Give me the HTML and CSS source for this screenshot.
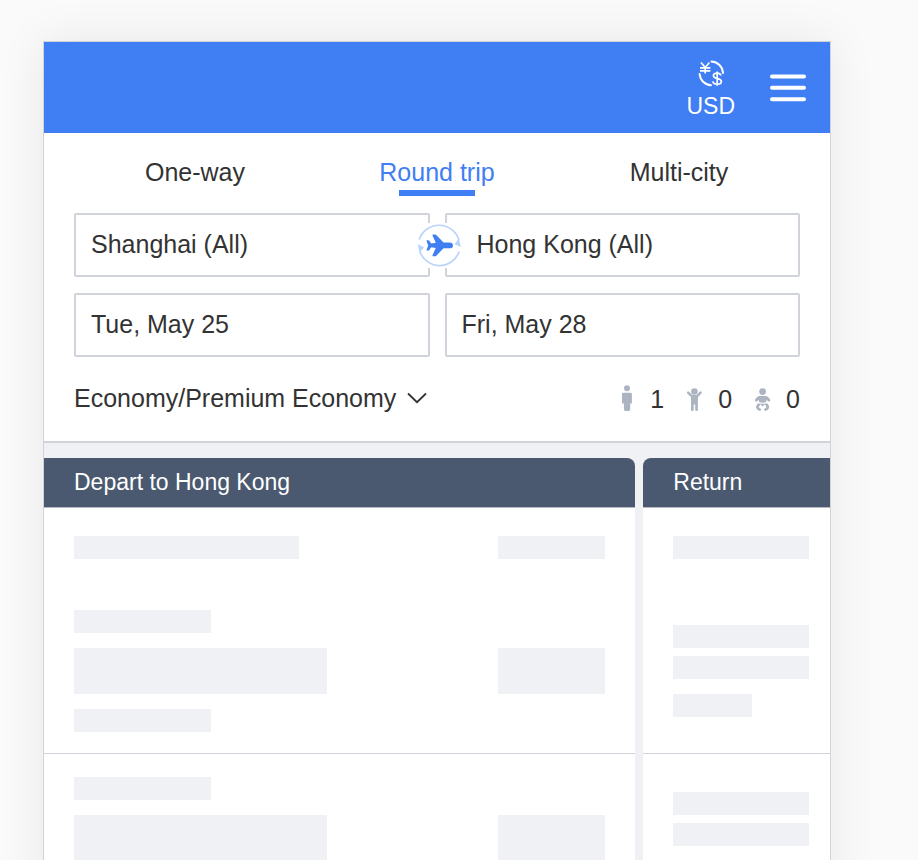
FILE: index.html
```html
<!DOCTYPE html>
<html lang="en">
<head>
<meta charset="utf-8">
<title>Flight search</title>
<link rel="stylesheet" href="styles.css">
</head>
<body>
<div class="app">
  <header class="topbar">
    <button class="currency" type="button">
      <svg width="28" height="28" viewBox="0 0 28 28" aria-hidden="true">
        <g fill="none" stroke="#fff" stroke-width="2" stroke-linecap="round">
          <path d="M14.500 1.500A12 12 0 0 1 26 13"/>
          <path d="M2.600 14A12 12 0 0 0 14 25.200"/>
        </g>
        <g fill="none" stroke="#fff" stroke-width="1.700">
          <path d="M4 2.500 8.200 7.500 12.400 2.500M8.200 7.500V13.500M3 7.800H13.400M3 10.800H13.400"/>
          <path d="M24 15.500C23.600 13.900 22.300 13.100 20.100 13.100c-2.300 0-3.700 1.100-3.700 2.700 0 3.800 8 1.800 8 5.600 0 1.700-1.700 2.700-4.200 2.700-2.500 0-4.100-1-4.400-2.800M20.200 11.500V25.800"/>
        </g>
      </svg>
      <span>USD</span>
    </button>
    <button class="menu" type="button" aria-label="Menu">
      <svg width="36" height="28" viewBox="0 0 36 28" aria-hidden="true">
        <path d="M2 2.400H34M2 13.800H34M2 25.200H34" stroke="#fff" stroke-width="4" stroke-linecap="round"/>
      </svg>
    </button>
  </header>

  <form class="search">
    <nav class="tabs">
      <a href="#one-way">One-way</a>
      <a href="#round-trip" class="active" aria-current="page">Round trip</a>
      <a href="#multi-city">Multi-city</a>
    </nav>
    <div class="fields">
      <input type="text" value="Shanghai (All)" aria-label="From">
      <input type="text" class="destination" value="Hong Kong (All)" aria-label="To">
      <button class="swap" type="button" aria-label="Swap cities">
        <svg width="45" height="45" viewBox="0 0 45 45" aria-hidden="true">
          <g fill="none" stroke="#b9d3fb" stroke-width="1.700">
            <path d="M2.300 16.500A20.800 20.800 0 0 1 42.100 17.500"/>
            <path d="M42.200 28.500A20.800 20.800 0 0 1 2.700 28"/>
          </g>
          <path d="M43.800 24 37.500 21.200 41.800 15.500zM.8 21 7 24.600 2.600 29.500z" fill="#b9d3fb"/>
          <path d="M36 22.400Q36 19.500 32.500 19.500H26.500L19.300 12Q18.800 11.500 18 11.500H16.200Q15.200 11.500 15.500 12.500L18.800 19.700 14.200 20.600 12.300 17.700Q12 17.200 11.300 17.200H10Q9.400 17.200 9.600 17.900L11.200 22.400 9.600 26.900Q9.400 27.600 10 27.600H11.300Q12 27.600 12.300 27.100L14.200 24.200 18.800 25.100 15.500 32.300Q15.200 33.300 16.200 33.300H18Q18.800 33.300 19.300 32.800L26.500 25.300H32.500Q36 25.300 36 22.400z" fill="#3f7ef3"/>
        </svg>
      </button>
      <input type="text" value="Tue, May 25" aria-label="Departure date">
      <input type="text" value="Fri, May 28" aria-label="Return date">
    </div>
    <div class="options">
      <div class="cabin">
        <select aria-label="Cabin class"><option>Economy/Premium Economy</option></select>
        <svg width="20" height="12" viewBox="0 0 20 12" aria-hidden="true">
          <path d="M1 1.500 10 10.200 19 1.500" fill="none" stroke="#333" stroke-width="1.800"/>
        </svg>
      </div>
      <div class="travellers">
        <span class="traveller" title="Adults">
          <svg width="17" height="26" viewBox="0 0 17 26" aria-hidden="true">
            <circle cx="9" cy="3.300" r="3"/>
            <path d="M5.200 7.800h7.400q1.300 0 1.300 1.300v9.500h-1.700v6q0 1.400-1.400 1.400H7.400q-1.500 0-1.500-1.400v-6H4V9.100q0-1.300 1.200-1.300z"/>
          </svg>
          <span>1</span>
        </span>
        <span class="traveller" title="Children">
          <svg width="17" height="26" viewBox="0 0 17 26" aria-hidden="true">
            <circle cx="8.400" cy="6.500" r="3.300"/>
            <path d="M2.200 7.700 6 11.300h4.900l3.700-3.600" fill="none" stroke="#adb4c1" stroke-width="2.500" stroke-linecap="round" stroke-linejoin="round"/>
            <path d="M5 10.800h6.900v13.900q0 1.300-1.300 1.300-1.400 0-1.400-1.300v-5.200H7.700v5.200q0 1.300-1.400 1.300T5 24.700z"/>
          </svg>
          <span>0</span>
        </span>
        <span class="traveller" title="Infants">
          <svg width="17" height="26" viewBox="0 0 17 26" aria-hidden="true">
            <circle cx="8.600" cy="6.600" r="3.400"/>
            <path d="M5.600 11h6c1.800 0 3.600 1.900 4.500 3.600.8 1.700-1.200 2.700-2.300 1.400l-1.500-1.200v2.300q-3.700 1.400-7.400 0v-2.300l-1.500 1.200c-1.100 1.300-3.100.3-2.300-1.400C2 12.900 3.800 11 5.600 11z"/>
            <path d="M5.200 18.200q3.400 1.200 6.800 0L8.600 21.400z"/>
            <path d="M4.600 19.700C2.600 21.700 3.300 24 5.700 24.500M12.600 19.700c2 2 1.300 4.300-1.100 4.800" fill="none" stroke="#adb4c1" stroke-width="2.800" stroke-linecap="round"/>
          </svg>
          <span>0</span>
        </span>
      </div>
    </div>
  </form>

  <main class="results">
    <section class="column depart">
      <h2>Depart to Hong Kong</h2>
      <div class="summary"><i class="bar w225"></i><i class="bar w107"></i></div>
      <div class="card">
        <i class="bar w137"></i>
        <div class="line"><i class="bar tall w253"></i><i class="bar tall w107"></i></div>
        <i class="bar w137"></i>
      </div>
      <div class="card">
        <i class="bar w137"></i>
        <div class="line"><i class="bar tall w253"></i><i class="bar tall w107"></i></div>
        <i class="bar w137"></i>
      </div>
    </section>
    <section class="column return">
      <h2>Return</h2>
      <div class="summary"><i class="bar full"></i></div>
      <div class="card">
        <i class="bar full"></i>
        <i class="bar full"></i>
        <i class="bar last"></i>
      </div>
      <div class="card">
        <i class="bar full"></i>
        <i class="bar full"></i>
        <i class="bar last"></i>
      </div>
    </section>
  </main>
</div>
</body>
</html>
```
FILE: styles.css
```css
* { box-sizing: border-box; }

body {
  margin: 0;
  padding: 41px 87px 0 43px;
  height: 100vh;
  overflow: hidden;
  background: #fafafa;
  color: #333;
  font: 25px/30px "Liberation Sans", Arial, sans-serif;
}

button, input, select {
  font: inherit;
  color: inherit;
  margin: 0;
}

button {
  display: block;
  padding: 0;
  border: 0;
  background: none;
}

svg { display: block; flex: none; }

.app {
  border: 1px solid #d2d3d6;
  background: #fff;
  box-shadow: 0 0 44px rgba(0, 0, 0, 0.08);
}

.topbar {
  display: flex;
  justify-content: flex-end;
  align-items: center;
  gap: 35px;
  height: 91px;
  padding: 0 24px;
  background: #3f7ef3;
}

.currency {
  display: flex;
  flex-direction: column;
  align-items: center;
  gap: 4px;
  padding-top: 4px;
  color: #fff;
  font-size: 23px;
  line-height: 28px;
}

.search {
  padding: 0 30px;
  border-bottom: 2px solid #d0d3da;
}

.tabs {
  display: grid;
  grid-template-columns: repeat(3, 1fr);
  text-align: center;
}

.tabs a {
  padding: 24px 0 17px;
  color: inherit;
  text-decoration: none;
}

.tabs a::after {
  content: "";
  display: block;
  width: 76px;
  height: 6px;
  margin: 3px auto 0;
}

.tabs .active { color: #3f7ef3; }
.tabs .active::after { background: #3f7ef3; }

.fields {
  position: relative;
  display: grid;
  grid-template-columns: 1fr 1fr;
  gap: 16px 15px;
}

.fields input {
  width: 100%;
  min-width: 0;
  height: 64px;
  padding: 0 15px 2px;
  border: 2px solid #d0d3da;
  border-radius: 2px;
  background: #fff;
}

.fields .destination { padding-left: 30px; }

.swap {
  position: absolute;
  top: 10px;
  left: 50%;
  margin-left: -20px;
  background: #fff;
}

.options {
  display: flex;
  justify-content: space-between;
  align-items: center;
  height: 84px;
}

.cabin {
  display: flex;
  align-items: center;
  gap: 10px;
  padding-bottom: 2px;
}

.cabin select {
  appearance: none;
  padding: 0;
  border: 0;
  background: none;
}

.travellers {
  display: flex;
  gap: 22px;
}

.traveller {
  display: flex;
  align-items: center;
  gap: 15px;
  fill: #adb4c1;
}

.traveller svg { margin-bottom: 3px; }

.results {
  display: grid;
  grid-template-columns: 19fr 6fr;
  gap: 8px;
  padding-top: 15px;
  background: #f0f1f5;
}

.column { background: linear-gradient(#f0f1f5 20px, #fff 20px); }

.column h2 {
  margin: 0;
  height: 50px;
  padding: 0 30px;
  border-bottom: 1px solid #b5bac5;
  background: #4a5970;
  color: #fff;
  font-size: 23px;
  font-weight: 400;
  line-height: 49px;
}

.depart h2 { border-top-right-radius: 8px; }
.return h2 { border-top-left-radius: 8px; }

.bar {
  display: block;
  height: 23px;
  background: #f0f1f5;
}

.tall { height: 46px; }
.w107 { width: 107px; }
.w137 { width: 137px; }
.w225 { width: 225px; }
.w253 { width: 253px; }
.full { width: 100%; }
.last { width: 58%; margin-top: 7px; }

.summary, .line {
  display: flex;
  justify-content: space-between;
}

.summary {
  height: 79px;
  padding: 28px 30px 0;
}

.card {
  display: flex;
  flex-direction: column;
  justify-content: center;
  gap: 15px;
  height: 167px;
  padding: 2px 30px 0;
  border-bottom: 1px solid #d0d3da;
}

.return .card { gap: 8px; }
.return .summary, .return .card { padding-right: 21px; }
```
